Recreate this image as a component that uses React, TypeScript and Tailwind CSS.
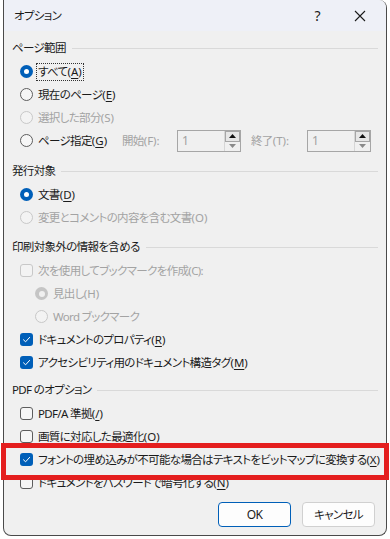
import React from "react";

type Mark = "radio-on" | "radio-off" | "radio-on-dis" | "radio-off-dis" | "check-on" | "check-off" | "check-off-dis";

const Indicator = ({ kind }: { kind: Mark }) => {
  if (kind === "radio-on")
    return (
      <span className="flex h-[13px] w-[13px] shrink-0 items-center justify-center rounded-full bg-[#005fb8]">
        <span className="h-[5px] w-[5px] rounded-full bg-white" />
      </span>
    );
  if (kind === "radio-on-dis")
    return (
      <span className="flex h-[13px] w-[13px] shrink-0 items-center justify-center rounded-full bg-[#c5c5c5]">
        <span className="h-[6px] w-[6px] rounded-full bg-[#f0f0f0]" />
      </span>
    );
  if (kind === "radio-off")
    return <span className="h-[13px] w-[13px] shrink-0 rounded-full border border-[#5d5d5d] bg-[#f6f6f6]" />;
  if (kind === "radio-off-dis")
    return <span className="h-[13px] w-[13px] shrink-0 rounded-full border border-[#c8c8c8] bg-[#f3f3f3]" />;
  if (kind === "check-on")
    return (
      <span className="flex h-[13px] w-[13px] shrink-0 items-center justify-center rounded-[3px] bg-[#005fb8]">
        <svg width="9" height="9" viewBox="0 0 9 9" fill="none">
          <path d="M1.5 4.8 L3.6 6.8 L7.6 2.4" stroke="white" strokeWidth="1" strokeLinecap="round" strokeLinejoin="round" />
        </svg>
      </span>
    );
  if (kind === "check-off")
    return <span className="h-[13px] w-[13px] shrink-0 rounded-[3px] border border-[#5d5d5d] bg-[#f6f6f6]" />;
  return <span className="h-[13px] w-[13px] shrink-0 rounded-[3px] border border-[#c8c8c8] bg-[#f3f3f3]" />;
};

const Label = ({ text, k, disabled }: { text: string; k: string; disabled?: boolean }) => (
  <span className={disabled ? "text-[#a3a3a3]" : "text-[#1b1b1b]"}>
    {text}
    <span className="tracking-normal">
      ({disabled ? k : <span className="underline underline-offset-2">{k}</span>})
    </span>
  </span>
);

const Row = ({
  kind,
  text,
  k,
  disabled,
  indent,
  focus,
  plain,
}: {
  kind: Mark;
  text: string;
  k?: string;
  disabled?: boolean;
  indent?: boolean;
  focus?: boolean;
  plain?: boolean;
}) => (
  <div className={`flex h-[23px] items-center gap-[3px] whitespace-nowrap ${indent ? "pl-[23px]" : "pl-[8px]"}`}>
    <Indicator kind={kind} />
    <span className={focus ? "border border-dotted border-[#333] px-[1px] leading-[16px]" : "px-[2px]"}>
      {plain || !k ? (
        <span className={disabled ? "text-[#a3a3a3]" : "text-[#1b1b1b]"}>{text}</span>
      ) : (
        <Label text={text} k={k} disabled={disabled} />
      )}
    </span>
  </div>
);

const Header = ({ title, className = "" }: { title: string; className?: string }) => (
  <div className={`flex h-[24px] items-center gap-[6px] whitespace-nowrap ${className}`}>
    <span className="text-[#1b1b1b]">{title}</span>
    <div className="h-px flex-1 bg-[#d9d9d9]" />
  </div>
);

const Spin = () => (
  <div className="flex h-[22px] w-[64px] border border-[#a6a6a6] bg-[#f0f0f0]">
    <span className="flex flex-1 items-center pl-[4px] pt-[1px] text-[12px] text-[#a0a0a0]">1</span>
    <div className="flex w-[16px] flex-col border-l border-[#d6d6d6]">
      <div className="flex flex-1 items-center justify-center border border-[#a6a6a6] bg-[#e6e6e6]">
        <svg width="7" height="4" viewBox="0 0 7 4">
          <path d="M0 4 L3.5 0 L7 4Z" fill="#111" />
        </svg>
      </div>
      <div className="flex flex-1 items-center justify-center">
        <svg width="7" height="4" viewBox="0 0 7 4">
          <path d="M0 0 L3.5 4 L7 0Z" fill="#8a8a8a" />
        </svg>
      </div>
    </div>
  </div>
);

export default function App() {
  return (
    <div className="relative h-[539px] w-[390px] overflow-hidden bg-white font-['Noto_Sans','Noto_Sans_CJK_JP',sans-serif] text-[11.5px] tracking-[-0.65px] [font-feature-settings:'palt']">
      <div className="ml-[3px] flex h-[536px] w-[384px] flex-col overflow-hidden rounded-b-[8px] rounded-tr-[8px] border-x border-b border-[#4a4a4a] bg-[#f0f0f0]">
        {/* Title bar */}
        <div className="flex h-[31px] shrink-0 items-center bg-[#eef0f7] pl-[10px] pr-[20px]">
          <span className="flex-1 text-[#1b1b1b]">オプション</span>
          <span className="mr-[34px] text-[14px] text-[#1b1b1b]">?</span>
          <svg width="12" height="12" viewBox="0 0 12 12">
            <path d="M1 1 L11 11 M11 1 L1 11" stroke="#1b1b1b" strokeWidth="1.1" />
          </svg>
        </div>

        {/* Body */}
        <div className="flex flex-1 flex-col px-[8px] pt-[5px]">
          <Header title="ページ範囲" />
          <Row kind="radio-on" text="すべて" k="A" focus />
          <Row kind="radio-off" text="現在のページ" k="E" />
          <Row kind="radio-off-dis" text="選択した部分" k="S" disabled />
          <div className="flex h-[23px] items-center whitespace-nowrap">
            <div className="flex w-[110px] items-center gap-[3px] pl-[8px]">
              <Indicator kind="radio-off" />
              <span className="px-[2px]">
                <Label text="ページ指定" k="G" />
              </span>
            </div>
            <span className="w-[55px] text-[#a3a3a3]">
              開始<span className="tracking-normal">(F):</span>
            </span>
            <Spin />
            <span className="ml-[10px] w-[56px] text-[#a3a3a3]">
              終了<span className="tracking-normal">(T):</span>
            </span>
            <Spin />
          </div>

          <Header title="発行対象" className="mt-[7px]" />
          <Row kind="radio-on" text="文書" k="D" />
          <Row kind="radio-off-dis" text="変更とコメントの内容を含む文書" k="O" disabled />

          <Header title="印刷対象外の情報を含める" className="mt-[6px]" />
          <Row kind="check-off-dis" text="次を使用してブックマークを作成(C):" disabled plain />
          <Row kind="radio-on-dis" text="見出し" k="H" disabled indent />
          <Row kind="radio-off-dis" text="Word ブックマーク" disabled indent plain />
          <Row kind="check-on" text="ドキュメントのプロパティ" k="R" />
          <Row kind="check-on" text="アクセシビリティ用のドキュメント構造タグ" k="M" />

          <Header title="PDF のオプション" className="mt-[4px]" />
          <Row kind="check-off" text="PDF/A 準拠" k="/" />
          <Row kind="check-off" text="画質に対応した最適化" k="O" />
          <Row kind="check-on" text="フォントの埋め込みが不可能な場合はテキストをビットマップに変換する" k="X" />
          <Row kind="check-off" text="ドキュメントをパスワードで暗号化する" k="N" />

          <div className="mt-[8px] flex justify-end gap-[11px] pr-[3px]">
            <button className="h-[25px] w-[73px] rounded-[4px] border border-[#005fb8] bg-[#fdfdfd] text-[12px] text-[#1b1b1b]">OK</button>
            <button className="h-[25px] w-[73px] rounded-[4px] border border-[#d0d0d0] bg-[#fdfdfd] text-[#1b1b1b]">キャンセル</button>
          </div>
        </div>
      </div>

      {/* Red highlight */}
      <div className="absolute left-[1px] top-[443px] h-[37px] w-[388px] border-[5px] border-[#e41e1e]" />
    </div>
  );
}
